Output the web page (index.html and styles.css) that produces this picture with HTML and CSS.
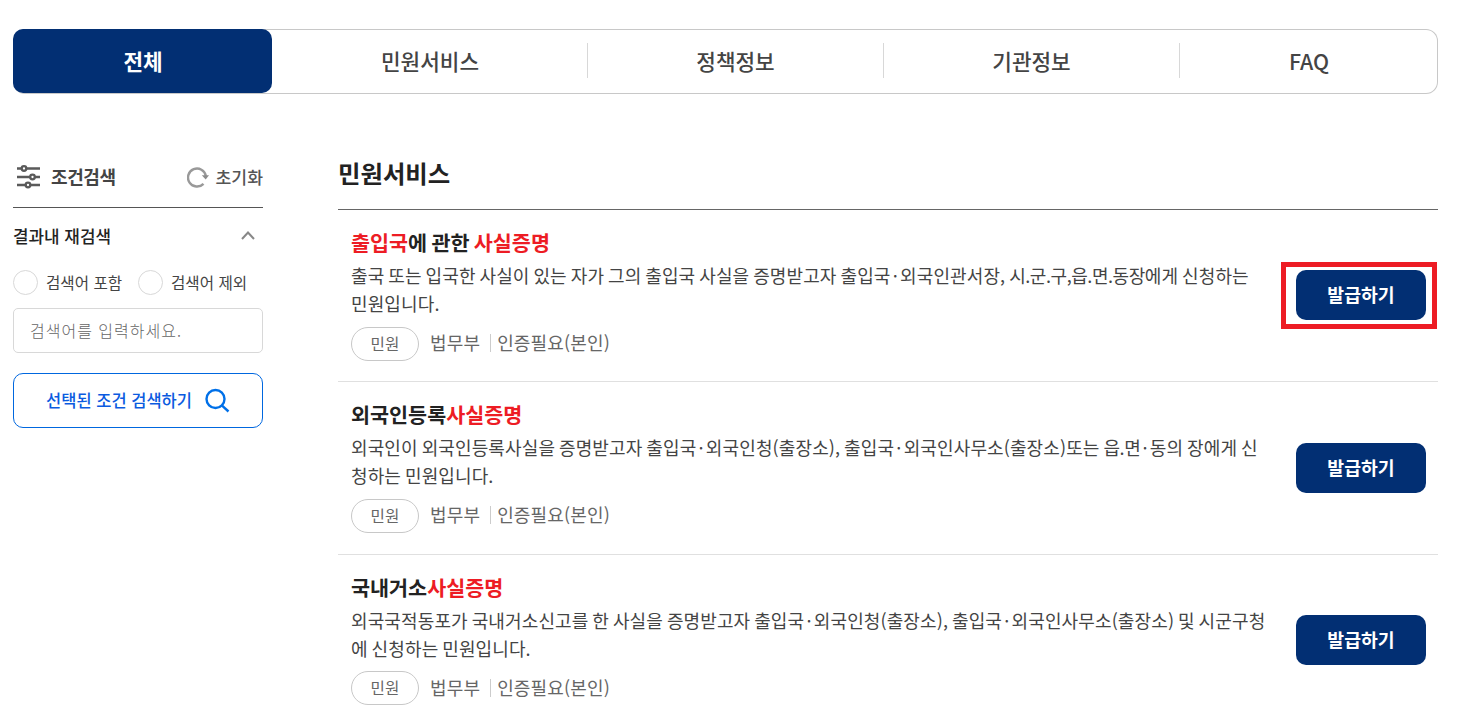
FILE: index.html
```
<!DOCTYPE html>
<html lang="ko">
<head>
    <meta charset="UTF-8">
    <meta name="viewport" content="width=device-width, initial-scale=1.0">
    <title>통합검색</title>
    <link rel="stylesheet" href="styles.css">
</head>
<body>
  <nav class="tabs">
    <a class="tab active">전체</a>
    <a class="tab">민원서비스</a>
    <a class="tab line">정책정보</a>
    <a class="tab line">기관정보</a>
    <a class="tab line">FAQ</a>
  </nav>

  <div class="container">
    <aside class="side">
      <div class="side-head">
        <svg width="26" height="24" viewBox="0 0 26 24" fill="none" stroke="#5a5a5a" stroke-width="2.300">
          <path d="M2 3.500h4.500M11.500 3.500H25M2 12h13M20 12h5M2 20h8.500M15.500 20H25"/>
          <circle cx="9" cy="3.500" r="2.300"/>
          <circle cx="17.500" cy="12" r="2.300"/>
          <circle cx="13" cy="20" r="2.300"/>
        </svg>
        <strong class="side-title">조건검색</strong>
        <button class="reset" type="button">
          <svg width="22" height="22" viewBox="0 0 22 22" fill="none">
            <path d="M16.500 17.800A9 9 0 1 1 18.900 10" stroke="#999" stroke-width="2.400"/>
            <path d="M14.800 9.200h7.200l-3.300 4.300z" fill="#8c8c8c"/>
          </svg>
          <span>초기화</span>
        </button>
      </div>

      <div class="again">
        <span>결과내 재검색</span>
        <svg width="14" height="9" viewBox="0 0 14 9" fill="none" stroke="#888" stroke-width="2"><path d="M1 8l6-6.500L13 8"/></svg>
      </div>

      <div class="radios">
        <label class="radio"><i></i>검색어 포함</label>
        <label class="radio"><i></i>검색어 제외</label>
      </div>

      <input class="keyword" type="text" placeholder="검색어를 입력하세요.">

      <button class="search" type="button">
        <span>선택된 조건 검색하기</span>
        <svg width="26" height="26" viewBox="0 0 26 26" fill="none" stroke="#0070e8" stroke-width="2.400"><circle cx="11.500" cy="11" r="9"/><path d="M17.800 17.300L24.500 23.500"/></svg>
      </button>
    </aside>

    <main class="result">
      <h2 class="result-title">민원서비스</h2>
      <ul class="list">
        <li class="item">
          <div class="info">
            <h3 class="name"><em>출입국</em>에 관한 <em>사실증명</em></h3>
            <p class="desc">출국 또는 입국한 사실이 있는 자가 그의 출입국 사실을 증명받고자 출입국<i>·</i>외국인관서장, <span class="units">시.군.구,읍.면.동장</span>에게 신청하는<br>민원입니다.</p>
            <div class="meta"><span class="tag">민원</span><span class="dept">법무부</span><span class="auth">인증필요(본인)</span></div>
          </div>
          <a class="issue marked">발급하기</a>
        </li>
        <li class="item">
          <div class="info">
            <h3 class="name">외국인등록<em>사실증명</em></h3>
            <p class="desc">외국인이 외국인등록사실을 증명받고자 출입국<i>·</i>외국인청(출장소), 출입국<i>·</i>외국인사무소(출장소)또는 <span class="units">읍.면</span><i>·</i>동의 장에게 신<br>청하는 민원입니다.</p>
            <div class="meta"><span class="tag">민원</span><span class="dept">법무부</span><span class="auth">인증필요(본인)</span></div>
          </div>
          <a class="issue">발급하기</a>
        </li>
        <li class="item">
          <div class="info">
            <h3 class="name">국내거소<em>사실증명</em></h3>
            <p class="desc">외국국적동포가 국내거소신고를 한 사실을 증명받고자 출입국<i>·</i>외국인청(출장소), 출입국<i>·</i>외국인사무소(출장소) 및 시군구청<br>에 신청하는 민원입니다.</p>
            <div class="meta"><span class="tag">민원</span><span class="dept">법무부</span><span class="auth">인증필요(본인)</span></div>
          </div>
          <a class="issue">발급하기</a>
        </li>
      </ul>
    </main>
  </div>
</body>
</html>
```
FILE: styles.css
```
* {
  box-sizing: border-box;
}

body {
  margin: 0;
  height: 707px;
  padding: 29px 23px 0 13px;
  overflow: hidden;
  background: #fff;
  color: #444;
  font-family: "Noto Sans CJK KR", sans-serif;
}

h2, h3, p, ul {
  margin: 0;
  padding: 0;
  list-style: none;
}

em {
  font-style: normal;
  color: #ed1c24;
}

button {
  font-family: inherit;
  background: none;
  border: 0;
  padding: 0;
}

/* tabs */
.tabs {
  display: grid;
  grid-template-columns: 259px 315px 296px 296px 259px;
  height: 65px;
  border-radius: 12px;
  box-shadow: inset 0 0 0 1px #c8c8c8;
}

.tab {
  display: flex;
  align-items: center;
  justify-content: center;
  height: 64px;
  padding: 0 0 2px 1px;
  font-size: 21.3px;
  font-weight: 500;
}

.tab.active {
  background: #022f73;
  color: #fff;
  border-radius: 10px;
  font-weight: 700;
}

.tab.line {
  background: linear-gradient(#d8d8d8, #d8d8d8) no-repeat 0 14px / 1px 35px;
}

/* layout */
.container {
  display: grid;
  grid-template-columns: 250px 1100px;
  column-gap: 75px;
  padding-top: 59px;
}

/* left side */
.side-head {
  display: flex;
  align-items: center;
  height: 55px;
  padding: 0 0 7px 2px;
  border-bottom: 1px solid #555;
}

.side-title {
  margin-left: 10px;
  padding-bottom: 2px;
  font-size: 18px;
  letter-spacing: -0.4px;
}

.reset {
  display: flex;
  align-items: center;
  gap: 7px;
  margin-left: auto;
  font-size: 17.2px;
  font-weight: 500;
  color: #555;
}

.reset span {
  padding-bottom: 1px;
}

.again {
  display: flex;
  align-items: center;
  justify-content: space-between;
  height: 54px;
  padding: 0 8px 0 0;
  font-size: 16.9px;
  font-weight: 500;
  color: #222;
}

.radios {
  display: flex;
  height: 46px;
  padding-top: 7px;
}

.radio {
  display: flex;
  align-items: center;
  width: 125px;
  height: 26px;
  font-size: 15.6px;
}

.radio i {
  width: 25px;
  height: 25px;
  margin-right: 8px;
  border: 1px solid #d8d8d8;
  border-radius: 50%;
}

.keyword {
  display: block;
  width: 250px;
  height: 45px;
  padding: 0 15px 1px 16px;
  border: 1px solid #d8d8d8;
  border-radius: 5px;
  font-family: inherit;
  font-size: 16px;
  letter-spacing: 1px;
}

.keyword::placeholder {
  color: #666;
  font-weight: 300;
}

.search {
  display: flex;
  align-items: center;
  justify-content: center;
  gap: 12px;
  width: 250px;
  height: 55px;
  margin-top: 20px;
  border: 1px solid #0067df;
  border-radius: 10px;
  color: #0b5be0;
  font-size: 16.5px;
  font-weight: 500;
}

.search span {
  padding-bottom: 2px;
}

/* result list */
.result-title {
  height: 57px;
  border-bottom: 1px solid #666;
  font-size: 24.4px;
  line-height: 39px;
  color: #222;
}

.item {
  display: flex;
  align-items: center;
  justify-content: space-between;
  height: 172.5px;
  padding: 0 12px 0 13px;
  border-bottom: 1px solid #e0e0e0;
}

.item:first-child {
  height: 172px;
}

.info {
  white-space: nowrap;
  padding-bottom: 2.5px;
}

.name {
  margin-top: -1px;
  font-size: 20.7px;
  line-height: 30px;
  word-spacing: -1.5px;
  color: #222;
}

.desc {
  margin-top: 4.3px;
  font-size: 18px;
  line-height: 28px;
  letter-spacing: 0.12px;
  word-spacing: -1.25px;
}

.desc i {
  margin: 0 2.2px;
  font-style: normal;
}

.units {
  letter-spacing: -0.45px;
}

.meta {
  display: flex;
  align-items: center;
  height: 34px;
  margin-top: 9.7px;
  font-size: 18px;
  letter-spacing: 0.15px;
  color: #666;
}

.tag {
  width: 68px;
  height: 34px;
  margin-right: 11px;
  border: 1px solid #c8c8c8;
  border-radius: 17px;
  font-size: 15.6px;
  line-height: 31px;
  text-align: center;
}

.dept {
  margin-top: -3px;
}

.auth {
  margin: -3px 0 0 10px;
  padding-left: 7px;
  background: linear-gradient(#ccc, #ccc) no-repeat 0 5px / 1px 18px;
}

.issue {
  position: relative;
  width: 130px;
  height: 50px;
  margin-bottom: 0.5px;
  border-radius: 10px;
  background: #022f73;
  color: #fff;
  font-size: 18.3px;
  font-weight: 700;
  line-height: 48px;
  text-align: center;
}

/* red guide box around the button */
.issue.marked::after {
  content: '';
  position: absolute;
  top: -8px;
  left: -15px;
  width: 156px;
  height: 67px;
  box-sizing: border-box;
  border: 5px solid #ed1c24;
}
```
